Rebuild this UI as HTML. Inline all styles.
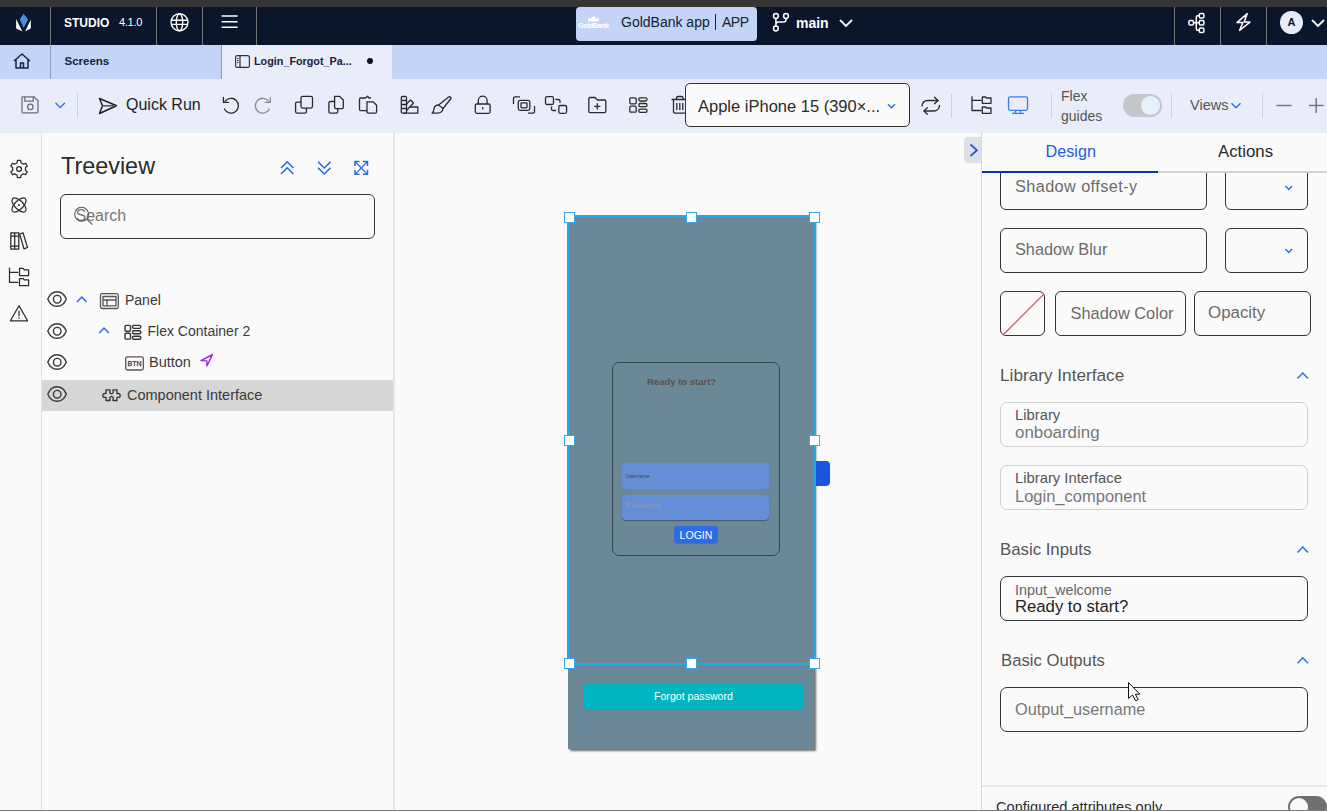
<!DOCTYPE html>
<html><head><meta charset="utf-8">
<style>
*{box-sizing:border-box;margin:0;padding:0}
html,body{width:1327px;height:811px;overflow:hidden;background:#f8f9fa;font-family:"Liberation Sans",sans-serif;position:relative}
.a{position:absolute}
svg{position:absolute;overflow:visible}
.t{position:absolute;white-space:nowrap;line-height:1}
.sep{position:absolute;width:1px;background:#767676}
.tsep{position:absolute;width:1px;background:#cdd0d6}
.h{position:absolute;width:11px;height:11px;background:#fff;border:1.5px solid #3aa6e6}
.ic{fill:none;stroke:#2b2b2b;stroke-width:1.5;stroke-linecap:round;stroke-linejoin:round}
</style></head><body>
<!-- top strip -->
<div class="a" style="left:0;top:0;width:1327px;height:7px;background:#353535"></div>
<!-- navy bar -->
<div class="a" style="left:0;top:7px;width:1327px;height:38px;background:#0b162c"></div>
<div class="sep" style="left:50px;top:7px;height:38px"></div>
<div class="sep" style="left:156px;top:7px;height:38px"></div>
<div class="sep" style="left:202px;top:7px;height:38px"></div>
<div class="sep" style="left:256px;top:7px;height:38px"></div>
<div class="sep" style="left:1174px;top:7px;height:38px"></div>
<div class="sep" style="left:1220px;top:7px;height:38px"></div>
<div class="sep" style="left:1266px;top:7px;height:38px"></div>
<!-- logo -->
<svg style="left:0;top:0" width="40" height="40" viewBox="0 0 40 40">
<path d="M23.6 13.7 L28.1 19.5 L23.6 28 L19.8 19.5 Z" fill="#4a8fdc"/>
<path d="M16.1 19 L22.3 31.2 L16.1 28.6 Z" fill="#fff"/>
<path d="M30.8 19.8 L25.1 31.2 L30.8 28.6 Z" fill="#fff"/>
</svg>
<div class="t" style="left:64px;top:17px;font-size:12px;font-weight:bold;color:#fff">STUDIO</div>
<div class="t" style="left:119px;top:17px;font-size:11px;color:#fff;letter-spacing:-0.3px">4.1.0</div>
<!-- globe -->
<svg style="left:0;top:0" width="1" height="1">
<g fill="none" stroke="#fff" stroke-width="1.35"><circle cx="179.5" cy="22.2" r="8.5"/><ellipse cx="179.5" cy="22.2" rx="3.2" ry="8.5"/><path d="M171.5 20.2 H187.5 M171.5 24.4 H187.5"/></g>
</svg>
<!-- hamburger -->
<svg style="left:0;top:0" width="1" height="1">
<g stroke="#fff" stroke-width="1.5"><path d="M221.6 16.1 H237.6 M221.6 21.8 H237.6 M221.6 27.3 H237.6"/></g>
</svg>
<!-- goldbank pill -->
<div class="a" style="left:576px;top:7px;width:181px;height:34px;background:#c3d4f7;border-radius:4px"></div>
<svg style="left:0;top:0" width="1" height="1">
<path d="M588.5 21.5 L588 17.5 L590.5 19 L592 16.8 L593.5 16.5 L595 16.8 L596.5 19 L599 17.5 L598.5 21.5 Z" fill="#fff"/>
<text x="593.5" y="28.2" font-size="7.4" font-weight="bold" font-family="Liberation Sans" fill="#fff" text-anchor="middle" textLength="31">GoldBank</text>
</svg>
<div class="t" style="left:621px;top:15px;font-size:14px;color:#141c33">GoldBank app</div><div class="a" style="left:715px;top:14px;width:1.3px;height:16px;background:#1a2233"></div><div class="t" style="left:722px;top:15px;font-size:14px;color:#1a2233;letter-spacing:-0.5px">APP</div>
<!-- branch -->
<svg style="left:0;top:0" width="1" height="1">
<g fill="none" stroke="#fff" stroke-width="1.5"><circle cx="775.9" cy="16" r="2.4"/><circle cx="786" cy="16" r="2.4"/><circle cx="775.9" cy="28.5" r="2.4"/><path d="M775.9 18.4 V26.1 M786 18.4 V19.5 Q786 22 783.5 22 H778.5 Q775.9 22 775.9 24.5"/></g>
</svg>
<div class="t" style="left:796px;top:16px;font-size:14px;font-weight:bold;color:#fff">main</div>
<svg style="left:839px;top:19px" width="14" height="8" viewBox="0 0 14 8">
<path d="M1 1L7 7L13 1" fill="none" stroke="#fff" stroke-width="1.8"/>
</svg>
<!-- hierarchy icon -->
<svg style="left:0;top:0" width="1" height="1">
<g fill="none" stroke="#fff" stroke-width="1.5"><rect x="1188.9" y="20.5" width="4.6" height="4.6" rx="1.3"/><rect x="1199.3" y="13.5" width="4.6" height="4.6" rx="1.3"/><rect x="1199.3" y="20.5" width="4.6" height="4.6" rx="1.3"/><rect x="1199.3" y="28" width="4.6" height="4.6" rx="1.3"/><path d="M1193.5 22.8 H1199.3 M1199.3 15.8 H1197.5 Q1196.3 15.8 1196.3 17 V29.1 Q1196.3 30.3 1197.5 30.3 H1199.3"/></g>
</svg>
<!-- lightning -->
<svg style="left:0;top:0" width="1" height="1">
<path d="M1247.2 13.6 L1236.9 22.6 H1242.8 L1239.6 30.4 L1250 22.1 H1244.2 Z" fill="none" stroke="#fff" stroke-width="1.5" stroke-linejoin="round"/>
</svg>
<div class="a" style="left:1280px;top:11px;width:23px;height:23px;border-radius:50%;background:#e6ecf9"></div>
<div class="t" style="left:1287.5px;top:17px;font-size:11px;font-weight:bold;color:#0b162c">A</div>
<svg style="left:1311px;top:19px" width="14" height="8" viewBox="0 0 14 8">
<path d="M1 1L7 7L13 1" fill="none" stroke="#fff" stroke-width="1.8"/>
</svg>

<!-- tab bar -->
<div class="a" style="left:0;top:45px;width:1327px;height:34px;background:#c3d4f7"></div>
<div class="a" style="left:50px;top:45px;width:1px;height:34px;background:#8c9ab8"></div>
<svg style="left:13px;top:53px" width="18" height="16" viewBox="0 0 18 16">
<g fill="none" stroke="#1a2040" stroke-width="1.5" stroke-linejoin="round"><path d="M1 8L9 1L17 8M3 6.5V15H15V6.5M7.5 15V10H10.5V15"/></g>
</svg>
<div class="t" style="left:64.5px;top:56px;font-size:11.5px;font-weight:bold;color:#1a2040">Screens</div>
<div class="a" style="left:221px;top:45px;width:1px;height:34px;background:#8f9bb5"></div><div class="a" style="left:222px;top:45px;width:170px;height:34px;background:#e8edf9"></div>
<svg style="left:235px;top:55px" width="15" height="13" viewBox="0 0 15 13">
<g fill="none" stroke="#333" stroke-width="1.2"><rect x="0.6" y="0.6" width="13.8" height="11.8" rx="1.5"/><path d="M5 0.6V12.4M2 3.5H3.6M2 5.5H3.6M2 7.5H3.6"/></g>
</svg>
<div class="t" style="left:254px;top:56px;font-size:10.8px;font-weight:bold;color:#1a2040">Login_Forgot_Pa...</div>
<div class="a" style="left:367px;top:58px;width:6px;height:6px;border-radius:50%;background:#111"></div>

<!-- toolbar -->
<div class="a" style="left:0;top:79px;width:1327px;height:54px;background:#e8edf9"></div>
<!-- save -->
<svg style="left:0;top:0" width="1" height="1"><g fill="none" stroke="#6e6e6e" stroke-width="1.25" stroke-linejoin="round">
<path d="M22 97.5 Q22 96.8 22.8 96.8 H34 L38 100.8 V112 Q38 112.8 37.2 112.8 H22.8 Q22 112.8 22 112 Z"/>
<path d="M24.8 96.8 V101.2 H33.2 V96.8"/><circle cx="30.3" cy="106.9" r="2.7"/></g></svg>
<svg style="left:0;top:0" width="1" height="1"><path d="M55.5 102.8 L60.2 107.6 L65 102.8" fill="none" stroke="#2f6fe0" stroke-width="1.35"/></svg>
<div class="tsep" style="left:77px;top:93px;height:25px"></div>
<!-- send -->
<svg style="left:0;top:0" width="1" height="1"><g fill="none" stroke="#1e1e1e" stroke-width="1.5" stroke-linejoin="round">
<path d="M99.5 98.5 L116.5 105.8 L99.5 113.5 L102.5 105.8 Z"/><path d="M102.5 105.8 H116" stroke="#555"/></g></svg>
<div class="t" style="left:126px;top:97px;font-size:16px;color:#1e1e1e">Quick Run</div>
<!-- undo redo -->
<svg style="left:0;top:0" width="1" height="1"><g fill="none" stroke-width="1.3" stroke-linecap="round" stroke-linejoin="round">
<path d="M225.1 101.2 A7.4 7.4 0 1 1 224.4 109" stroke="#2b2b2b"/><path d="M223.4 97.3 V102.4 H228.5" stroke="#2b2b2b"/>
<path d="M268.65 101.2 A7.4 7.4 0 1 0 269.35 109" stroke="#8a8a8a"/><path d="M270.35 97.3 V102.4 H265.25" stroke="#8a8a8a"/>
</g></svg>
<!-- duplicate -->
<svg style="left:0;top:0" width="1" height="1"><g fill="none" stroke="#2b2b2b" stroke-width="1.3" stroke-linejoin="round">
<rect x="301" y="96.3" width="11.5" height="11.8" rx="1.8"/><path d="M301 102.2 H297 Q295.6 102.2 295.6 103.6 V111.8 Q295.6 113.2 297 113.2 H305 Q306.4 113.2 306.4 111.8 V108.1"/>
<!-- copy -->
<path d="M334.6 96.3 H339.5 L343.3 100 V107.3 Q343.3 108.7 341.9 108.7 H336 Q334.6 108.7 334.6 107.3 Z"/><path d="M334.6 101.5 H330.3 Q328.9 101.5 328.9 102.9 V111.8 Q328.9 113.2 330.3 113.2 H336.3 Q337.7 113.2 337.7 111.8 V108.7"/>
<!-- paste -->
<path d="M367 101.8 H373 L376.6 105.3 V111.8 Q376.6 113.2 375.2 113.2 H368.4 Q367 113.2 367 111.8 Z"/><path d="M371 98 H369 L367.5 96.3 L365.5 98 H360.8 Q359.5 98 359.5 99.3 V109.3 Q359.5 110.6 360.8 110.6 H367"/>
</g></svg>
<!-- palette -->
<svg style="left:0;top:0" width="1" height="1"><g fill="none" stroke="#2b2b2b" stroke-width="1.3" stroke-linejoin="round">
<rect x="401.3" y="96.5" width="5.2" height="16.7" rx="1.2"/><path d="M401.3 100.5 H406.5 M401.3 104.5 H406.5 M401.3 108.5 H406.5"/>
<path d="M406.5 104 L410.5 100 L413.5 103 L406.5 110.5"/><path d="M410 107 H417.8 V113.2 H403.5"/></g></svg>
<!-- brush -->
<svg style="left:0;top:0" width="1" height="1"><g fill="none" stroke="#2b2b2b" stroke-width="1.3" stroke-linejoin="round">
<path d="M438.5 105 L449 96.8 Q451 96.5 451 98.5 L443 108.5 Z"/><path d="M438.5 105 Q434.5 105 434 109 Q433.5 112 432 113.2 H437.5 Q442.5 113 443 108.5"/></g></svg>
<!-- lock -->
<svg style="left:0;top:0" width="1" height="1"><g fill="none" stroke="#2b2b2b" stroke-width="1.3" stroke-linejoin="round">
<rect x="475.3" y="104" width="14.8" height="9.3" rx="1.5"/><path d="M478.3 104 V100.5 A4.4 4.4 0 0 1 487.1 100.5 V104"/><path d="M482.7 107.3 V109.5"/></g></svg>
<!-- group -->
<svg style="left:0;top:0" width="1" height="1"><g fill="none" stroke="#2b2b2b" stroke-width="1.3" stroke-linejoin="round">
<path d="M513.5 104 V98.3 Q513.5 96.8 515 96.8 H520"/><path d="M534.5 106 V111.8 Q534.5 113.2 533 113.2 H528"/>
<rect x="518.3" y="100.3" width="11.5" height="10" rx="1.8"/><rect x="521" y="102.8" width="6" height="5" rx="0.5"/></g></svg>
<!-- ungroup -->
<svg style="left:0;top:0" width="1" height="1"><g fill="none" stroke="#2b2b2b" stroke-width="1.3" stroke-linejoin="round">
<rect x="545.5" y="96.7" width="8" height="7.8" rx="1.5"/><rect x="558.8" y="105.5" width="7.8" height="7.8" rx="1.5"/>
<path d="M555.5 99.5 H558.5 Q560 99.5 560 101 V103"/><path d="M551.5 106.5 V109 Q551.5 110.5 553 110.5 H556"/></g></svg>
<!-- folder plus -->
<svg style="left:0;top:0" width="1" height="1"><g fill="none" stroke="#2b2b2b" stroke-width="1.3" stroke-linejoin="round">
<path d="M588.8 98.8 Q588.8 97.5 590 97.5 H595 L597.5 100 H604.5 Q605.8 100 605.8 101.3 V111.3 Q605.8 112.6 604.5 112.6 H590 Q588.8 112.6 588.8 111.3 Z"/><path d="M597.3 103.3 V109.5 M594.2 106.4 H600.4"/></g></svg>
<!-- grid -->
<svg style="left:0;top:0" width="1" height="1"><g fill="none" stroke="#2b2b2b" stroke-width="1.3" stroke-linejoin="round">
<rect x="629.8" y="97.8" width="6.4" height="6" rx="1.2"/><rect x="629.8" y="106.2" width="6.4" height="6" rx="1.2"/>
<rect x="638.8" y="97.8" width="8.2" height="3.2" rx="1.4"/><rect x="638.8" y="103.5" width="8.2" height="3.2" rx="1.4"/><rect x="638.8" y="109.2" width="8.2" height="3.2" rx="1.4"/></g></svg>
<!-- trash -->
<svg style="left:0;top:0" width="1" height="1"><g fill="none" stroke="#2b2b2b" stroke-width="1.3" stroke-linejoin="round">
<path d="M671.5 99.5 H688 M676.5 99.5 V97.8 Q676.5 96.5 678 96.5 H681.5 Q683 96.5 683 97.8 V99.5"/><path d="M673.5 99.5 V111.8 Q673.5 113.2 675 113.2 H686"/><path d="M676.8 103 V110 M679.8 103 V110 M682.8 103 V110"/></g></svg>
<!-- device box -->
<div class="a" style="left:685px;top:83px;width:225px;height:44px;background:#fafafa;border:1px solid #333;border-radius:5px"></div>
<div class="t" style="left:698px;top:98px;font-size:16.5px;color:#2a2a2a">Apple iPhone 15 (390×...</div>
<svg style="left:0;top:0" width="1" height="1"><path d="M888 104.3 L891.5 107.8 L895 104.3" fill="none" stroke="#2f6fe0" stroke-width="1.5"/></svg>
<!-- sync -->
<svg style="left:0;top:0" width="1" height="1"><g fill="none" stroke="#2b2b2b" stroke-width="1.3" stroke-linecap="round" stroke-linejoin="round">
<path d="M922 106 Q922.5 100.5 928 100.5 H938"/><path d="M934.5 97.3 L938 100.5 L934.5 103.8"/>
<path d="M939.5 105.5 Q939 111 933.5 111 H924"/><path d="M927.3 107.8 L924 111 L927.3 114.3"/></g></svg>
<div class="tsep" style="left:951px;top:94px;height:24px"></div>
<!-- tree icon -->
<svg style="left:0;top:0" width="1" height="1"><g fill="none" stroke="#2b2b2b" stroke-width="1.3" stroke-linejoin="round">
<path d="M972 96.3 V110.5 H981.5 M972 100.3 H981.5"/>
<path d="M982.3 97 H985.5 L986.5 98 H991 V103.3 H982.3 Z"/><path d="M982.3 107 H985.5 L986.5 108 H991 V113.3 H982.3 Z"/></g></svg>
<!-- monitor -->
<svg style="left:0;top:0" width="1" height="1"><g fill="none" stroke="#3a7af0" stroke-width="1.3" stroke-linejoin="round">
<rect x="1008.5" y="96.8" width="19" height="13.5" rx="1.8"/><path d="M1015.5 110.3 V113.2 M1020.5 110.3 V113.2 M1012 113.3 H1024"/></g></svg>
<div class="tsep" style="left:1051px;top:93px;height:25px"></div>
<div class="t" style="left:1061px;top:86px;font-size:14px;line-height:20px;color:#555">Flex<br>guides</div>
<div class="a" style="left:1123px;top:94px;width:39px;height:23px;border-radius:12px;background:#c3c6cb"></div>
<div class="a" style="left:1141px;top:96px;width:19px;height:19px;border-radius:50%;background:#e4f2fc"></div>
<div class="tsep" style="left:1171px;top:93px;height:25px"></div>
<div class="t" style="left:1190px;top:98px;font-size:14.5px;color:#555">Views</div>
<svg style="left:0;top:0" width="1" height="1"><path d="M1231.5 103.3 L1236 107.8 L1240.5 103.3" fill="none" stroke="#2f6fe0" stroke-width="1.5"/></svg>
<div class="tsep" style="left:1262px;top:93px;height:25px"></div>
<svg style="left:0;top:0" width="1" height="1"><g stroke="#777" stroke-width="1.5"><path d="M1276.5 105.5 H1291.5 M1309 105.5 H1323.5 M1316.2 98 V113"/></g></svg>


<!-- left rail -->
<div class="a" style="left:0;top:133px;width:42px;height:677px;background:#f9f9f9;border-right:1px solid #e2e2e2"></div>
<!-- tree panel -->
<div class="a" style="left:42px;top:133px;width:353px;height:677px;background:#fafafa;border-right:2px solid #e6e6e6"></div>
<!-- rail icons -->
<svg style="left:0;top:0" width="1" height="1"><g fill="none" stroke="#2b2b2b" stroke-width="1.25" stroke-linejoin="round" stroke-linecap="round">
<path d="M15.86 163.46 L17.13 162.69 L17.40 160.46 L20.72 160.46 L20.99 162.69 L22.26 163.46 L23.56 164.17 L25.63 163.29 L27.29 166.17 L25.49 167.52 L25.46 169.00 L25.49 170.48 L27.29 171.83 L25.63 174.71 L23.56 173.83 L22.26 174.54 L20.99 175.31 L20.72 177.54 L17.40 177.54 L17.13 175.31 L15.86 174.54 L14.56 173.83 L12.49 174.71 L10.83 171.83 L12.63 170.48 L12.66 169.00 L12.63 167.52 L10.83 166.17 L12.49 163.29 L14.56 164.17 Z"/>
<circle cx="19.06" cy="169" r="2.4"/>
<ellipse cx="19" cy="205" rx="9" ry="4.3" transform="rotate(45 19 205)"/><ellipse cx="19" cy="205" rx="9" ry="4.3" transform="rotate(-45 19 205)"/>
<path d="M10.8 232.8 H14.7 V249 H10.8 Z M14.7 232.8 H18.8 V249 H14.7 Z M10.8 246 H18.8 M10.8 236 H18.8"/>
<path d="M19.6 234 L23 232.8 L27.5 247.5 L24 248.8 Z"/>
<path d="M9.5 268.1 V282.3 H17.8 M9.5 272.4 H17.8"/>
<path d="M19.5 268.4 H23.1 L24.3 269.8 H28.6 V275.5 H19.5 Z"/><path d="M19.5 278.5 H23.1 L24.3 279.9 H28.6 V285.5 H19.5 Z"/>
<path d="M19 305.8 L27.6 320.8 H10.4 Z"/><path d="M19 311 V315.5"/></g>
<circle cx="19" cy="205" r="0.9" fill="#2b2b2b"/><circle cx="19" cy="318" r="0.8" fill="#2b2b2b"/></svg>
<!-- treeview header -->
<div class="t" style="left:61px;top:155px;font-size:23.4px;color:#2b2b2b">Treeview</div>
<svg style="left:0;top:0" width="1" height="1"><g fill="none" stroke="#2a68e6" stroke-width="1.6">
<path d="M281 168 L287.2 161.8 L293.4 168 M281 174 L287.2 167.8 L293.4 174"/>
<path d="M318 161.8 L324.3 168 L330.6 161.8 M318 167.8 L324.3 174 L330.6 167.8"/>
</g><g fill="none" stroke="#2a68e6"><path d="M355.5 162 L367 173.8 M367 162 L355.5 173.8" stroke-width="1.2"/><path d="M355 166 V161.5 H359.5 M363 161.5 H367.5 V166 M367.5 169.8 V174.3 H363 M359.5 174.3 H355 V169.8" stroke-width="1.5"/></g></svg>
<div class="a" style="left:60px;top:194px;width:315px;height:45px;border:1px solid #333;border-radius:6px;background:#fafafa"></div>
<div class="t" style="left:75.5px;top:208px;font-size:16px;color:#777">Search</div>
<svg style="left:0;top:0" width="1" height="1"><g fill="none" stroke="#555" stroke-width="1.05"><circle cx="81.6" cy="214.2" r="6.9"/><path d="M86.8 219.3 L92.5 224.7"/></g></svg>
<!-- rows -->
<div class="a" style="left:42px;top:380px;width:351px;height:31px;background:#d6d6d6"></div>
<svg style="left:0;top:0" width="1" height="1"><g fill="none" stroke="#3a3a3a" stroke-width="1.4">
<path d="M47.8 299 C51.5 289.3 62.5 289.3 66.3 299 C62.5 308.7 51.5 308.7 47.8 299 Z"/><circle cx="57.2" cy="299.2" r="3.8"/>
<path d="M47.8 331 C51.5 321.3 62.5 321.3 66.3 331 C62.5 340.7 51.5 340.7 47.8 331 Z"/><circle cx="57.2" cy="331.2" r="3.8"/>
<path d="M47.8 362 C51.5 352.3 62.5 352.3 66.3 362 C62.5 371.7 51.5 371.7 47.8 362 Z"/><circle cx="57.2" cy="362.2" r="3.8"/>
<path d="M47.8 394 C51.5 384.3 62.5 384.3 66.3 394 C62.5 403.7 51.5 403.7 47.8 394 Z"/><circle cx="57.2" cy="394.2" r="3.8"/>
</g>
<g fill="none" stroke="#2a6ae8" stroke-width="1.5"><path d="M77 302 L81.8 297 L86.6 302"/><path d="M99.3 333 L104 328 L108.8 333"/></g>
<g fill="none" stroke="#555" stroke-width="1.3" stroke-linejoin="round">
<rect x="100.5" y="293.7" width="17.8" height="14.8" rx="1.8"/><path d="M103 296.5 H116 V305.8 H103 Z M103 300 H116 M107 300 V305.8"/>
</g>
<g fill="none" stroke="#333" stroke-width="1.4" stroke-linejoin="round">
<rect x="125" y="325.4" width="5.5" height="5.8" rx="1.2"/><rect x="125" y="333.3" width="5.5" height="5.8" rx="1.2"/>
<rect x="132.5" y="325.4" width="8.3" height="3" rx="1.3"/><rect x="132.5" y="330.8" width="8.3" height="3" rx="1.3"/><rect x="132.5" y="336.2" width="8.3" height="3" rx="1.3"/>
</g>
<g fill="none" stroke="#555" stroke-width="1.3"><rect x="125.7" y="356.8" width="17.6" height="13.2" rx="1.8"/></g>
<text x="134.5" y="366.3" font-size="7" font-family="Liberation Sans" fill="#333" text-anchor="middle" stroke="#333" stroke-width="0.25">BTN</text>
<path d="M200.9 360.6 L212.4 354.6 L206.9 366 V360.9 Z" fill="none" stroke="#9a1ce0" stroke-width="1.3" stroke-linejoin="round"/>
<path d="M106 389.8 H110 V390.8 A1.8 1.8 0 1 0 113 390.8 V389.8 H117 V393.5 H118.3 A1.9 1.9 0 1 1 118.3 397.3 H117 V400.5 H113 V399.3 A1.8 1.8 0 1 0 110 399.3 V400.5 H106 V397.3 H104.7 A1.9 1.9 0 1 1 104.7 393.5 H106 Z" fill="none" stroke="#333" stroke-width="1.3" stroke-linejoin="round"/>
</svg>
<div class="t" style="left:125px;top:293px;font-size:14px;color:#3a3a3a">Panel</div>
<div class="t" style="left:147.5px;top:324px;font-size:14px;color:#3a3a3a">Flex Container 2</div>
<div class="t" style="left:149px;top:355px;font-size:14.5px;color:#3a3a3a">Button</div>
<div class="t" style="left:127px;top:387.7px;font-size:14.5px;color:#3a3a3a">Component Interface</div>

<!-- canvas -->
<div class="a" style="left:395px;top:133px;width:586px;height:677px;background:#fafafa"></div>
<!-- collapse tab -->
<div class="a" style="left:964px;top:137px;width:17px;height:26px;background:#dde1e7;border-radius:4px 0 0 4px"></div>
<svg style="left:0;top:0" width="1" height="1"><path d="M970.5 144.5 L977 150.3 L970.5 156" fill="none" stroke="#2059d8" stroke-width="1.8"/></svg>
<!-- phone -->
<div class="a" style="left:568px;top:216px;width:246px;height:533px;background:#6a8898;box-shadow:2px 2px 2px rgba(0,0,0,0.55)"></div>
<div class="a" style="left:612px;top:362px;width:168px;height:194px;border:1px solid #3b4550;border-radius:7px"></div>
<div class="t" style="left:647px;top:377px;font-size:9.5px;font-weight:bold;color:#55524f">Ready to start?</div>
<div class="a" style="left:622px;top:463px;width:147px;height:26px;background:#648fd8;border-radius:4px"></div>
<div class="t" style="left:626px;top:474px;font-size:5.2px;color:#444">Username</div>
<div class="a" style="left:622px;top:495px;width:147px;height:25px;background:#648fd8;border-radius:4px;box-shadow:0 1px 1px rgba(0,0,0,0.35)"></div>
<div class="t" style="left:626px;top:501px;font-size:9px;font-family:'Liberation Serif',serif;color:#9a9a9a">Password</div>
<div class="a" style="left:674px;top:526px;width:44px;height:17px;background:#2e6be6;border-radius:4px;box-shadow:0 1px 1px rgba(120,90,60,0.6)"></div>
<div class="t" style="left:679.5px;top:530px;font-size:10.6px;color:#fff">LOGIN</div>
<div class="a" style="left:583px;top:684px;width:221px;height:25px;background:#00b5c2;border-radius:4px"></div>
<div class="t" style="left:654px;top:691px;font-size:10.6px;color:#fff">Forgot password</div>
<!-- selection -->
<div class="a" style="left:567px;top:215px;width:249px;height:450px;border:2px solid #2aa9e0"></div>
<div class="a" style="left:816px;top:461px;width:14px;height:25px;background:#1a56db;border-radius:0 4px 4px 0"></div>
<div class="h" style="left:564px;top:211.5px"></div><div class="h" style="left:686px;top:211.5px"></div><div class="h" style="left:808.5px;top:211.5px"></div>
<div class="h" style="left:564px;top:434.5px"></div><div class="h" style="left:808.5px;top:434.5px"></div>
<div class="h" style="left:564px;top:657.5px"></div><div class="h" style="left:686px;top:657.5px"></div><div class="h" style="left:808.5px;top:657.5px"></div>

<!-- right panel -->
<div class="a" style="left:981px;top:133px;width:346px;height:677px;background:#fafafa;border-left:1px solid #d8d8d8"></div>
<div class="a" style="left:982px;top:173px;width:345px;height:637px;overflow:hidden">
 <div class="a" style="left:18px;top:-12px;width:207px;height:49px;border:1px solid #333;border-radius:6px"></div>
 <div class="t" style="left:33px;top:5px;font-size:16.3px;color:#6b6b6b;letter-spacing:0.4px">Shadow offset-y</div>
 <div class="a" style="left:243px;top:-12px;width:83px;height:49px;border:1px solid #333;border-radius:6px"></div>
</div>
<svg style="left:0;top:0" width="1" height="1"><g fill="none" stroke="#2f6fe0" stroke-width="1.5"><path d="M1285.5 186 L1288.8 189.5 L1292 186"/><path d="M1285.5 249 L1288.8 252.5 L1292 249"/>
<path d="M1297.5 378.5 L1302.8 373 L1308 378.5"/><path d="M1297.5 552.5 L1302.8 547 L1308 552.5"/><path d="M1297.5 663.2 L1302.8 657.8 L1308 663.2"/></g></svg>
<div class="a" style="left:982px;top:171px;width:345px;height:2px;background:#d2d2d2"></div>
<div class="a" style="left:982px;top:171px;width:176px;height:2px;background:#0b2fb5"></div>
<div class="t" style="left:1045.5px;top:143.3px;font-size:16.2px;color:#2160dc">Design</div>
<div class="t" style="left:1218px;top:144px;font-size:16.8px;color:#2a2a2a">Actions</div>
<div class="a" style="left:1000px;top:228px;width:207px;height:45px;border:1px solid #333;border-radius:6px"></div>
<div class="t" style="left:1015px;top:241px;font-size:16.3px;color:#6b6b6b">Shadow Blur</div>
<div class="a" style="left:1225px;top:228px;width:83px;height:45px;border:1px solid #333;border-radius:6px"></div>
<div class="a" style="left:1000px;top:291px;width:45px;height:45px;border:1px solid #333;border-radius:6px;overflow:hidden"><svg style="left:0;top:0" width="45" height="45"><path d="M1 44 L44 1" stroke="#d04040" stroke-width="1.2"/></svg></div>
<div class="a" style="left:1055px;top:291px;width:131px;height:45px;border:1px solid #333;border-radius:6px"></div>
<div class="t" style="left:1070.5px;top:304.6px;font-size:16.4px;color:#6b6b6b">Shadow Color</div>
<div class="a" style="left:1194px;top:291px;width:117px;height:45px;border:1px solid #333;border-radius:6px"></div>
<div class="t" style="left:1208px;top:304.6px;font-size:16.9px;color:#6b6b6b">Opacity</div>
<div class="t" style="left:1000px;top:367px;font-size:17.2px;color:#555">Library Interface</div>
<div class="a" style="left:1000px;top:402px;width:308px;height:45px;border:1px solid #cfcfcf;border-radius:7px"></div>
<div class="t" style="left:1015px;top:408px;font-size:14.8px;color:#555">Library</div>
<div class="t" style="left:1015px;top:425.3px;font-size:16.9px;color:#777">onboarding</div>
<div class="a" style="left:1000px;top:465px;width:308px;height:45px;border:1px solid #cfcfcf;border-radius:7px"></div>
<div class="t" style="left:1015px;top:471px;font-size:14.8px;color:#555">Library Interface</div>
<div class="t" style="left:1015px;top:488.3px;font-size:16.5px;color:#777">Login_component</div>
<div class="t" style="left:1000px;top:542px;font-size:16.8px;color:#555">Basic Inputs</div>
<div class="a" style="left:1000px;top:576px;width:308px;height:45px;border:1px solid #333;border-radius:7px"></div>
<div class="t" style="left:1015px;top:583px;font-size:14.4px;color:#666">Input_welcome</div>
<div class="t" style="left:1015px;top:598.6px;font-size:16.7px;color:#222">Ready to start?</div>
<div class="t" style="left:1001px;top:653px;font-size:16.7px;color:#555">Basic Outputs</div>
<div class="a" style="left:1000px;top:687px;width:308px;height:45px;border:1px solid #333;border-radius:7px"></div>
<div class="t" style="left:1015px;top:701px;font-size:16.3px;color:#777">Output_username</div>
<div class="a" style="left:982px;top:785px;width:345px;height:2px;background:#e8e8e8"></div>
<div class="t" style="left:996px;top:800px;font-size:14.6px;color:#2a2a2a">Configured attributes only</div>
<div class="a" style="left:1288px;top:796px;width:39px;height:22px;border-radius:11px;background:#707070"></div>
<div class="a" style="left:1290px;top:798px;width:18px;height:18px;border-radius:50%;background:#fafafa"></div>
<!-- cursor -->
<svg style="left:0;top:0" width="1" height="1"><path d="M1128.5 682.5 V698.3 L1132.6 695 L1135.6 700.8 L1138.2 699.6 L1135.4 694.2 H1139.8 Z" fill="#fff" stroke="#111" stroke-width="1" stroke-linejoin="round"/></svg>

<div class="a" style="left:0;top:810px;width:1327px;height:1px;background:#7a7a7a"></div>
</body></html>
